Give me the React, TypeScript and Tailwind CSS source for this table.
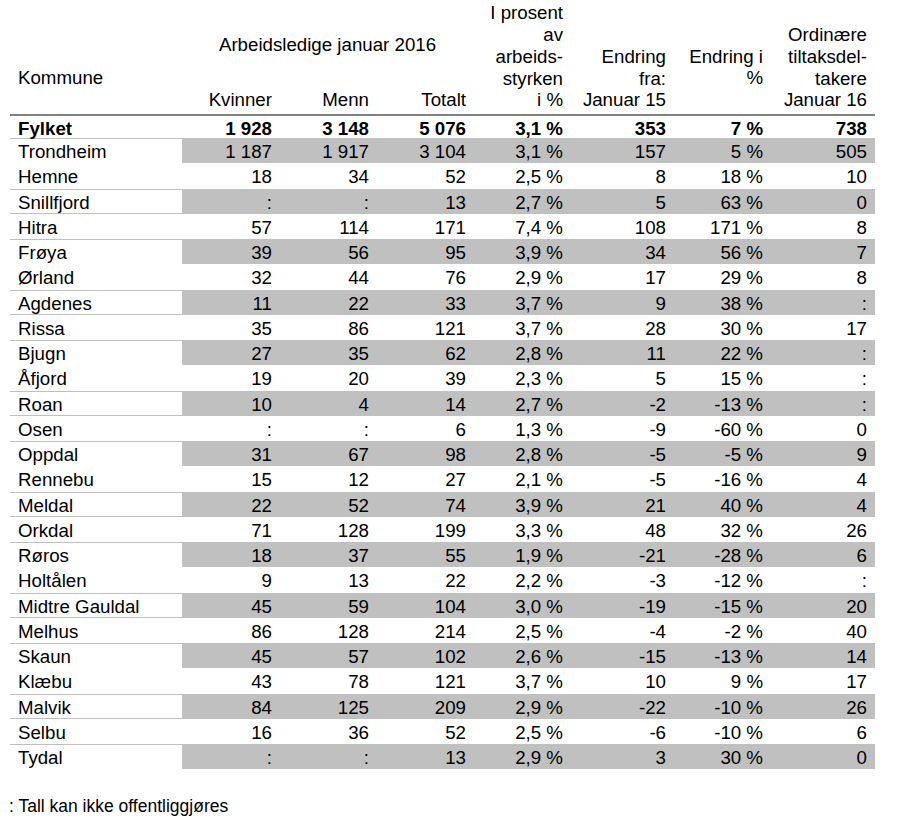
import React from "react";

type Row = [string, string, string, string, string, string, string, string];

const rows: Row[] = [
  ["Trondheim", "1 187", "1 917", "3 104", "3,1 %", "157", "5 %", "505"],
  ["Hemne", "18", "34", "52", "2,5 %", "8", "18 %", "10"],
  ["Snillfjord", ":", ":", "13", "2,7 %", "5", "63 %", "0"],
  ["Hitra", "57", "114", "171", "7,4 %", "108", "171 %", "8"],
  ["Frøya", "39", "56", "95", "3,9 %", "34", "56 %", "7"],
  ["Ørland", "32", "44", "76", "2,9 %", "17", "29 %", "8"],
  ["Agdenes", "11", "22", "33", "3,7 %", "9", "38 %", ":"],
  ["Rissa", "35", "86", "121", "3,7 %", "28", "30 %", "17"],
  ["Bjugn", "27", "35", "62", "2,8 %", "11", "22 %", ":"],
  ["Åfjord", "19", "20", "39", "2,3 %", "5", "15 %", ":"],
  ["Roan", "10", "4", "14", "2,7 %", "-2", "-13 %", ":"],
  ["Osen", ":", ":", "6", "1,3 %", "-9", "-60 %", "0"],
  ["Oppdal", "31", "67", "98", "2,8 %", "-5", "-5 %", "9"],
  ["Rennebu", "15", "12", "27", "2,1 %", "-5", "-16 %", "4"],
  ["Meldal", "22", "52", "74", "3,9 %", "21", "40 %", "4"],
  ["Orkdal", "71", "128", "199", "3,3 %", "48", "32 %", "26"],
  ["Røros", "18", "37", "55", "1,9 %", "-21", "-28 %", "6"],
  ["Holtålen", "9", "13", "22", "2,2 %", "-3", "-12 %", ":"],
  ["Midtre Gauldal", "45", "59", "104", "3,0 %", "-19", "-15 %", "20"],
  ["Melhus", "86", "128", "214", "2,5 %", "-4", "-2 %", "40"],
  ["Skaun", "45", "57", "102", "2,6 %", "-15", "-13 %", "14"],
  ["Klæbu", "43", "78", "121", "3,7 %", "10", "9 %", "17"],
  ["Malvik", "84", "125", "209", "2,9 %", "-22", "-10 %", "26"],
  ["Selbu", "16", "36", "52", "2,5 %", "-6", "-10 %", "6"],
  ["Tydal", ":", ":", "13", "2,9 %", "3", "30 %", "0"],
];

const cols = "grid grid-cols-[172px_95px_97px_97px_97px_103px_97px_107px]";

export default function App() {
  return (
    <div
      className="w-[919px] h-[818px] bg-white text-black text-[18.7px] leading-[21.7px]"
      style={{ fontFamily: '"Liberation Sans", Arial, sans-serif' }}
    >
      <div className="ml-[10px] w-[865px]">
        {/* Header */}
        <div className={`${cols} h-[114px]`}>
          <div className="flex items-end pl-[8px] pb-[25px]">Kommune</div>
          <div className="col-span-3 flex flex-col justify-between pt-[34px] pb-[3px]">
            <div className="text-center pl-[2px]">Arbeidsledige januar 2016</div>
            <div className="grid grid-cols-[95px_97px_97px]">
              <div className="text-right pr-[5px]">Kvinner</div>
              <div className="text-right pr-[5px]">Menn</div>
              <div className="text-right pr-[5px]">Totalt</div>
            </div>
          </div>
          <div className="flex flex-col justify-end items-end text-right pr-[5px] pb-[3px]">
            <div>I prosent</div>
            <div>av</div>
            <div>arbeids-</div>
            <div>styrken</div>
            <div>i %</div>
          </div>
          <div className="flex flex-col justify-end items-end text-right pr-[5px] pb-[3px]">
            <div>Endring</div>
            <div>fra:</div>
            <div>Januar 15</div>
          </div>
          <div className="flex flex-col justify-end items-end text-right pr-[5px] pb-[25px]">
            <div>Endring i</div>
            <div>%</div>
          </div>
          <div className="flex flex-col justify-end items-end text-right pr-[8px] pb-[3px]">
            <div>Ordinære</div>
            <div>tiltaksdel-</div>
            <div>takere</div>
            <div>Januar 16</div>
          </div>
        </div>
        <div className="h-[2px] bg-[#808080]" />

        {/* Fylket */}
        <div className={`${cols} h-[22px] items-center pt-[2px] font-bold`}>
          <div className="pl-[8px]">Fylket</div>
          <div className="text-right pr-[5px]">1 928</div>
          <div className="text-right pr-[5px]">3 148</div>
          <div className="text-right pr-[5px]">5 076</div>
          <div className="text-right pr-[5px]">3,1 %</div>
          <div className="text-right pr-[5px]">353</div>
          <div className="text-right pr-[5px]">7 %</div>
          <div className="text-right pr-[8px]">738</div>
        </div>

        {rows.map((r, i) => {
          const gray = i % 2 === 0;
          return (
            <div
              key={r[0]}
              className={`${cols} h-[25.25px] ${gray ? "bg-[#c0c0c0]" : "bg-white"}`}
            >
              <div
                className={`pl-[8px] pt-[2px] flex items-center ${gray ? "bg-white my-[1px]" : ""}`}
              >
                {r[0]}
              </div>
              {r.slice(1).map((v, j) => (
                <div
                  key={j}
                  className={`flex items-center justify-end pt-[2px] ${j === 6 ? "pr-[8px]" : "pr-[5px]"}`}
                >
                  {v}
                </div>
              ))}
            </div>
          );
        })}
      </div>
      <div className="ml-[9px] mt-[27px] text-[17.5px] leading-[20px]">
        : Tall kan ikke offentliggjøres
      </div>
    </div>
  );
}
